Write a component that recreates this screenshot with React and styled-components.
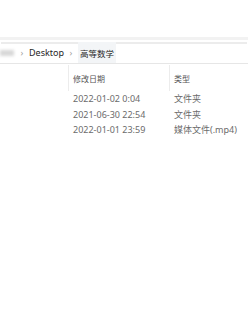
import React from "react";
import styled, { createGlobalStyle } from "styled-components";

const rows = [
  { date: "2022-01-02 0:04", type: "文件夹" },
  { date: "2021-06-30 22:54", type: "文件夹" },
  { date: "2022-01-01 23:59", type: "媒体文件(.mp4)" },
];

const App = () => {
  return (
    <>
      <GlobalStyle />
      <Window>
        <TopArea />
        <Band />
        <Breadcrumb>
          <BlurredName />
          <Chevron>›</Chevron>
          <Crumb>Desktop</Crumb>
          <Chevron>›</Chevron>
          <Crumb current>高等数学</Crumb>
        </Breadcrumb>
        <List>
          <HeaderRow>
            <HeaderCell>修改日期</HeaderCell>
            <HeaderCell>类型</HeaderCell>
          </HeaderRow>
          {rows.map((r) => (
            <Row key={r.date}>
              <Cell>{r.date}</Cell>
              <Cell>{r.type}</Cell>
            </Row>
          ))}
        </List>
      </Window>
    </>
  );
};

// Styles ***************************
const GlobalStyle = createGlobalStyle`
  body {
    margin: 0;
    background: #fff;
    font-family: "Noto Sans", "Noto Sans CJK SC", sans-serif;
  }
`;

const Window = styled.div`
  width: 248px;
  height: 333px;
  background: #fff;
  overflow: hidden;
`;

const TopArea = styled.div`
  height: 37px;
`;

const Band = styled.div`
  height: 3px;
  background: #f2f2f2;
  border-bottom: 2px solid #fff;
  box-shadow: 0 3px 0 -1px #ececec;
`;

const Breadcrumb = styled.div`
  display: flex;
  align-items: center;
  height: 21px;
  border-bottom: 1px solid #e6e6e6;
  color: #222;
`;

const BlurredName = styled.div`
  width: 14px;
  height: 6px;
  margin-top: 1px;
  background: #d8d8d8;
  filter: blur(1.5px);
`;

const Chevron = styled.span`
  width: 14px;
  margin-left: 1px;
  text-align: center;
  color: #a0a0a0;
  font-size: 9px;
  line-height: 21px;
`;

const Crumb = styled.span`
  display: flex;
  align-items: center;
  height: 100%;
  padding: 0 ${({ current }) => (current ? "2px" : "0")};
  margin-right: ${({ current }) => (current ? "0" : "-1px")};
  background: ${({ current }) => (current ? "#f3f5f7" : "transparent")};
  font-size: ${({ current }) => (current ? "8.5px" : "9px")};
  color: #262626;
`;

const List = styled.div`
  padding-left: 68px;
`;

const HeaderRow = styled.div`
  display: grid;
  grid-template-columns: 101px 1fr;
  height: 26px;
  margin-top: 1px;
`;

const HeaderCell = styled.div`
  display: flex;
  align-items: center;
  padding-left: 4px;
  border-left: 1px solid #ececec;
  font-size: 8px;
  color: #555;
`;

const Row = styled.div`
  display: grid;
  grid-template-columns: 101px 1fr;
  height: 15.5px;
  align-items: center;
`;

const Cell = styled.div`
  padding-left: 5px;
  font-size: 9px;
  color: #6b6b6b;
  white-space: nowrap;
`;

export default App;
